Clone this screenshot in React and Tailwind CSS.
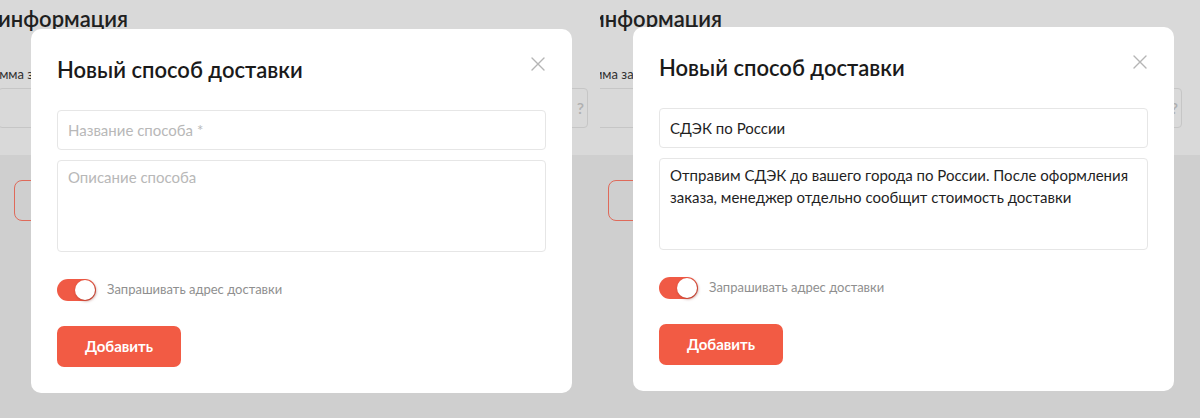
import React from "react";

const font = { fontFamily: "Lato, 'Liberation Sans', sans-serif" };

const CloseIcon = () => (
  <svg width="14" height="14" viewBox="0 0 14 14" fill="none">
    <path d="M1 1L13 13M13 1L1 13" stroke="#b5b5b5" strokeWidth="1.4" strokeLinecap="round" />
  </svg>
);

const Toggle = () => (
  <div className="relative w-[39px] h-[22px] rounded-full bg-[#f05a45] shrink-0">
    <div className="absolute right-[1px] top-[1px] w-[20px] h-[20px] rounded-full bg-white shadow-[1px_1px_3px_rgba(120,30,20,0.55)]" />
  </div>
);

// страница за модалкой (затемнённая)
const BackPage = ({ shift }) => (
  <div className={`h-full flex flex-col ${shift}`}>
    <div className="h-[155px] bg-[#d9d9d9] flex flex-col">
      <div className="flex justify-end w-[130px] ml-[-2px] mt-[5px] text-[22px] leading-[28px] font-semibold text-[#202020] whitespace-nowrap overflow-hidden">
        <span>Дополнительная информация</span>
      </div>
      <div className="ml-[-16px] mt-[33px] text-[13px] leading-[16px] text-[#303030] whitespace-nowrap">Сумма заказа</div>
      <div className="flex items-stretch mt-[6px] gap-[8px] h-[40px]">
        <div className="w-[562px] ml-[-2px] border border-[#c6c6c6] rounded-[4px]" />
        <div className="w-[20px] flex items-center justify-end border border-[#c6c6c6] rounded-[4px] text-[16px] font-semibold text-[#b0b0b0] pr-[3px]">?</div>
      </div>
    </div>
    <div className="flex-1 bg-[#cfcfcf] pt-[25px] pl-[14px]">
      <div className="w-[200px] h-[41px] border border-[#df6a5a] rounded-[8px]" />
    </div>
  </div>
);

const Modal = ({ pos, name, desc }) => (
  <div className={`absolute ${pos} w-[541px] h-[364px] bg-white rounded-[10px] px-[26px] pt-[27px] flex flex-col`}>
    <div className="absolute right-[27px] top-[28px]">
      <CloseIcon />
    </div>
    <h2 className="text-[22px] leading-[28px] font-semibold text-[#1a1a1a]">Новый способ доставки</h2>
    <div className="mt-[26px] h-[40px] border border-[#e6e6e6] rounded-[4px] px-[10px] flex items-center text-[15px]">
      {name ? <span className="text-[#1f1f1f]">{name}</span> : <span className="text-[#b8b8b8]">Название способа *</span>}
    </div>
    <div className="mt-[10px] h-[92px] border border-[#e6e6e6] rounded-[4px] px-[10px] pt-[5px] text-[15px] leading-[22px]">
      {desc ? <span className="text-[#1f1f1f]">{desc}</span> : <span className="text-[#b8b8b8]">Описание способа</span>}
    </div>
    <div className="mt-[27px] flex items-center gap-[11px]">
      <Toggle />
      <span className="text-[13px] text-[#8f8f8f]">Запрашивать адрес доставки</span>
    </div>
    <button className="mt-[25px] w-[124px] h-[41px] rounded-[7px] bg-[#f25b44] text-white text-[15px] font-bold">Добавить</button>
  </div>
);

export default function App() {
  return (
    <div className="w-[1200px] h-[418px] flex overflow-hidden" style={font}>
      <div className="relative w-[600px] h-full overflow-hidden">
        <BackPage shift="" />
        <Modal pos="left-[31px] top-[29px]" />
      </div>
      <div className="relative w-[600px] h-full overflow-hidden">
        <BackPage shift="ml-[-6px]" />
        <Modal
          pos="left-[33px] top-[27px]"
          name="СДЭК по России"
          desc="Отправим СДЭК до вашего города по России. После оформления заказа, менеджер отдельно сообщит стоимость доставки"
        />
      </div>
    </div>
  );
}
